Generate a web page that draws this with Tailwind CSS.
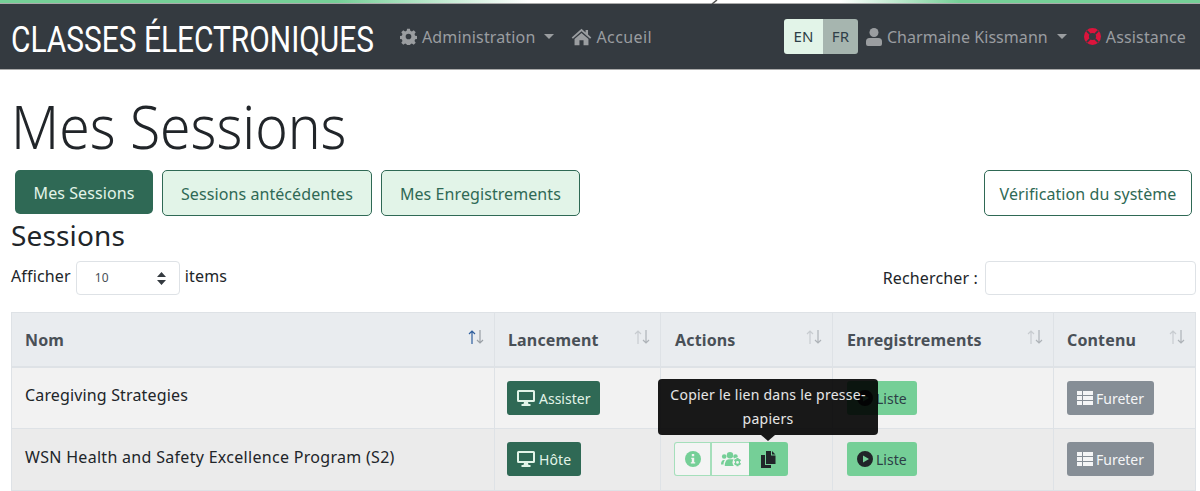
<!DOCTYPE html>
<html lang="en">
<head>
  <meta charset="UTF-8" />
  <title>Mes Sessions</title>
  <script src="https://cdn.jsdelivr.net/npm/@tailwindcss/browser@4"></script>
</head>
<body class="bg-white font-['Noto_Sans',sans-serif] text-[#212529] tracking-[0.15px] overflow-hidden h-[491px]">

  <!-- Top strip -->
  <div class="relative h-[4px] border-b border-[#aaa] bg-[linear-gradient(90deg,#75cf97_0%,#75cf97_28%,#ffffff_44%,#ffffff_70%,#75cf97_80%,#75cf97_100%)]">
    <svg class="absolute left-[711px] top-0 w-[7px] h-[4px]" viewBox="0 0 7 4"><path d="M6 0 1 4" stroke="#555" stroke-width="1.500"/></svg>
  </div>

  <!-- Navbar -->
  <nav class="h-[66px] bg-[#343a40] flex items-center pl-[11px] pr-[14px] border-b border-[#aaa]">
    <span class="w-[389px] shrink-0 mt-[6px] text-[36px] leading-none tracking-normal text-white font-['Roboto',sans-serif] scale-x-[0.83] origin-left whitespace-nowrap">CLASSES ÉLECTRONIQUES</span>
    <div class="flex items-center gap-[5px] text-[#9a9da0] text-[16px] whitespace-nowrap">
      <svg class="w-[17px] h-[17px]" viewBox="0 0 24 24" fill="#9a9da0"><path fill-rule="evenodd" d="M10 1h4l.6 3 2.2.9 2.6-1.7 2.8 2.8-1.7 2.6.9 2.2 3 .6v4l-3 .6-.9 2.2 1.7 2.6-2.8 2.8-2.6-1.7-2.2.9-.6 3h-4l-.6-3-2.2-.9-2.6 1.7-2.8-2.8 1.7-2.6-.9-2.2-3-.6v-4l3-.6.9-2.2-1.700-2.600 2.800-2.800 2.600 1.700 2.200-.9zM12 8a4 4 0 1 0 0 8 4 4 0 0 0 0-8z"/></svg>
      <span>Administration</span>
      <span class="ml-[4px] border-x-[5px] border-x-transparent border-t-[5px] border-t-[#9a9da0]"></span>
    </div>
    <div class="flex items-center gap-[4px] ml-[17px] text-[#9a9da0] text-[16px]">
      <svg class="w-[21px] h-[18px]" viewBox="0 0 24 22" fill="#9a9da0"><path d="M12 1 0 11.500l1.500 1.700L12 4l10.500 9.200 1.500-1.700-4-3.500V2.500h-3V5.400z"/><path d="M12 6 3.500 13.400V21H9.500v-6h5v6h6v-7.600z"/></svg>
      <span class="tracking-[0.4px]">Accueil</span>
    </div>
    <div class="ml-auto flex items-center text-[16px] text-[#9a9da0] whitespace-nowrap">
      <div class="flex h-[35px] rounded-[3px] overflow-hidden text-[15px] mr-[8px]">
        <span class="w-[39px] bg-[#e2f4e8] text-[#2c3e46] flex items-center justify-center">EN</span>
        <span class="w-[35px] bg-[#a6b5af] text-[#2f4048] flex items-center justify-center">FR</span>
      </div>
      <svg class="w-[16px] h-[18px] mr-[5px]" viewBox="0 0 16 18" fill="#9a9da0"><circle cx="8" cy="4.500" r="4.500"/><path d="M3.500 10h9A3.500 3.500 0 0 1 16 13.500V16a2 2 0 0 1-2 2H2a2 2 0 0 1-2-2v-2.500A3.500 3.500 0 0 1 3.500 10z"/></svg>
      <span class="tracking-[0.06px]">Charmaine Kissmann</span>
      <span class="ml-[9px] mr-[17px] border-x-[5px] border-x-transparent border-t-[5px] border-t-[#9a9da0]"></span>
      <svg class="w-[17px] h-[17px] mr-[5px]" viewBox="0 0 24 24"><circle cx="12" cy="12" r="12" fill="#dc143c"/><circle cx="12" cy="12" r="5" fill="#343a40"/><path d="m4 4 4.500 4.500M20 4l-4.500 4.500M4 20l4.500-4.500M20 20l-4.500-4.500" stroke="#343a40" stroke-width="2.500"/></svg>
      <span>Assistance</span>
    </div>
  </nav>

  <main class="relative">
    <h1 class="pl-[12px] pt-[18px] text-[60px] leading-[76px] tracking-normal font-light text-[#212529] scale-x-[0.92] origin-left whitespace-nowrap">Mes Sessions</h1>

    <!-- Tabs -->
    <div class="flex items-start pl-[15px] pr-[8px] mt-[6px] text-[16px] tracking-[0.08px]">
      <a class="w-[138px] h-[44px] pt-[1px] flex items-center justify-center rounded-[5px] bg-[#2f6955] text-[#e2f4e8]">Mes Sessions</a>
      <a class="ml-[9px] h-[46px] px-[18px] pt-[1px] flex items-center rounded-[5px] border border-[#2f6955] bg-[#e2f4e8] text-[#2f6955]">Sessions antécédentes</a>
      <a class="ml-[9px] h-[46px] px-[18px] pt-[1px] flex items-center rounded-[5px] border border-[#2f6955] bg-[#e2f4e8] text-[#2f6955]">Mes Enregistrements</a>
      <a class="ml-auto w-[208px] h-[46px] pt-[1px] flex items-center justify-center rounded-[5px] border border-[#2f6955] bg-white text-[#2f6955]">Vérification du système</a>
    </div>

    <h2 class="pl-[11px] -mt-[1px] text-[28px] leading-[40px]">Sessions</h2>

    <!-- Table controls -->
    <div class="flex items-start justify-between pl-[11px] pr-[4px] mt-[6px] text-[16px]">
      <div class="flex">
        <span class="mt-[3px]">Afficher</span>
        <span class="ml-[5px] w-[104px] h-[34px] rounded-[4px] border border-[#dee2e6] flex items-center justify-between pl-[18px] pr-[13px] text-[12px] text-[#495057]">
          10
          <svg class="w-[9px] h-[13px]" viewBox="0 0 9 13" fill="#343a40"><path d="M4.500 0 9 5H0zM4.500 13 0 8h9z"/></svg>
        </span>
        <span class="ml-[5px] mt-[3px]">items</span>
      </div>
      <div class="flex items-center">
        <span class="mr-[7px]">Rechercher :</span>
        <span class="w-[211px] h-[34px] rounded-[4px] border border-[#dee2e6] bg-white"></span>
      </div>
    </div>

    <!-- Sessions table -->
    <div class="ml-[11px] mr-[4px] mt-[17px] grid grid-cols-[484px_166px_172px_221px_142px] text-[16px] border-t border-[#dee2e6]">
      <div class="h-[55px] bg-[#e9ecef] border-b-2 border-x border-[#dee2e6] flex items-center justify-between pl-[13px] pr-[10px] font-bold text-[#495057]">Nom
        <svg class="w-[16px] h-[14px] -mt-[5px]" viewBox="0 0 16 14" fill="none" stroke-width="1.200"><path d="M4 14V1M1 4l3-3 3 3" stroke="#2f5f9e"/><path d="M12 0v13M9 10l3 3 3-3" stroke="#9aa0a6"/></svg></div>
      <div class="h-[55px] bg-[#e9ecef] border-b-2 border-r border-[#dee2e6] flex items-center justify-between pl-[13px] pr-[10px] font-bold text-[#495057]">Lancement
        <svg class="w-[16px] h-[14px] -mt-[5px]" viewBox="0 0 16 14" fill="none" stroke-width="1.200"><path d="M4 14V1M1 4l3-3 3 3" stroke="#c8ccd0"/><path d="M12 0v13M9 10l3 3 3-3" stroke="#aeb3b8"/></svg></div>
      <div class="h-[55px] bg-[#e9ecef] border-b-2 border-r border-[#dee2e6] flex items-center justify-between pl-[14px] pr-[10px] font-bold text-[#495057]">Actions
        <svg class="w-[16px] h-[14px] -mt-[5px]" viewBox="0 0 16 14" fill="none" stroke-width="1.200"><path d="M4 14V1M1 4l3-3 3 3" stroke="#c8ccd0"/><path d="M12 0v13M9 10l3 3 3-3" stroke="#aeb3b8"/></svg></div>
      <div class="h-[55px] bg-[#e9ecef] border-b-2 border-r border-[#dee2e6] flex items-center justify-between pl-[14px] pr-[10px] font-bold text-[#495057]">Enregistrements
        <svg class="w-[16px] h-[14px] -mt-[5px]" viewBox="0 0 16 14" fill="none" stroke-width="1.200"><path d="M4 14V1M1 4l3-3 3 3" stroke="#c8ccd0"/><path d="M12 0v13M9 10l3 3 3-3" stroke="#aeb3b8"/></svg></div>
      <div class="h-[55px] bg-[#e9ecef] border-b-2 border-r border-[#dee2e6] flex items-center justify-between pl-[13px] pr-[10px] font-bold text-[#495057]">Contenu
        <svg class="w-[16px] h-[14px] -mt-[5px]" viewBox="0 0 16 14" fill="none" stroke-width="1.200"><path d="M4 14V1M1 4l3-3 3 3" stroke="#c8ccd0"/><path d="M12 0v13M9 10l3 3 3-3" stroke="#aeb3b8"/></svg></div>

      <!-- Row 1 -->
      <div class="h-[61px] bg-[#f2f2f2] border-b border-x border-[#dee2e6] flex items-center pl-[13px] pb-[6px]">Caregiving Strategies</div>
      <div class="h-[61px] bg-[#f2f2f2] border-b border-r border-[#dee2e6] flex items-center pl-[12px]">
        <a class="h-[34px] px-[10px] flex items-center gap-[4px] rounded-[3px] bg-[#2f6955] text-[#e2f4e8] text-[14px] tracking-normal">
          <svg class="w-[18px] h-[16px]" viewBox="0 0 18 16" fill="#e2f4e8"><path fill-rule="evenodd" d="M1.500 0h15A1.500 1.500 0 0 1 18 1.500v9a1.500 1.500 0 0 1-1.500 1.500H11l.5 2h2v2h-9v-2h2l.5-2H1.500A1.500 1.500 0 0 1 0 10.500v-9A1.500 1.500 0 0 1 1.500 0zM2 2v8h14V2z"/></svg>
          Assister</a>
      </div>
      <div class="h-[61px] bg-[#f2f2f2] border-b border-r border-[#dee2e6]"></div>
      <div class="h-[61px] bg-[#f2f2f2] border-b border-r border-[#dee2e6] flex items-center pl-[14px]">
        <a class="h-[34px] px-[10px] flex items-center gap-[3px] rounded-[3px] bg-[#75cf97] text-[#2c3e46] text-[14px] tracking-normal">
          <svg class="w-[16px] h-[16px]" viewBox="0 0 16 16" fill="#212529"><path fill-rule="evenodd" d="M8 0a8 8 0 1 1 0 16A8 8 0 0 1 8 0zM6 4.500v7l6-3.500z"/></svg>
          Liste</a>
      </div>
      <div class="h-[61px] bg-[#f2f2f2] border-b border-r border-[#dee2e6] flex items-center pl-[13px]">
        <a class="h-[34px] px-[10px] flex items-center gap-[3px] rounded-[3px] bg-[#868e96] text-[#f4f5f6] text-[14px] tracking-normal">
          <svg class="w-[16px] h-[14px]" viewBox="0 0 16 14" fill="#f4f5f6"><path d="M0 0h5v4H0zM6 0h10v4H6zM0 5h5v4H0zM6 5h10v4H6zM0 10h5v4H0zM6 10h10v4H6z"/></svg>
          Fureter</a>
      </div>

      <!-- Row 2 -->
      <div class="h-[62px] bg-[#ebebeb] border-b border-x border-[#dee2e6] flex items-center pl-[13px] pb-[6px] tracking-[0.3px]">WSN Health and Safety Excellence Program (S2)</div>
      <div class="h-[62px] bg-[#ebebeb] border-b border-r border-[#dee2e6] flex items-center pl-[12px] pb-[1px]">
        <a class="h-[34px] px-[10px] flex items-center gap-[4px] rounded-[3px] bg-[#2f6955] text-[#e2f4e8] text-[14px] tracking-[0.1px]">
          <svg class="w-[18px] h-[16px]" viewBox="0 0 18 16" fill="#e2f4e8"><path fill-rule="evenodd" d="M1.500 0h15A1.500 1.500 0 0 1 18 1.500v9a1.500 1.500 0 0 1-1.500 1.500H11l.5 2h2v2h-9v-2h2l.5-2H1.500A1.500 1.500 0 0 1 0 10.500v-9A1.500 1.500 0 0 1 1.500 0zM2 2v8h14V2z"/></svg>
          Hôte</a>
      </div>
      <div class="h-[62px] bg-[#ebebeb] border-b border-r border-[#dee2e6] flex items-center pl-[13px] pb-[1px]">
        <div class="relative flex h-[34px]">
          <span class="w-[38px] rounded-l-[3px] border border-[#a5dfbb] border-r-2 bg-[#f4f4f4] flex items-center justify-center">
            <svg class="w-[16px] h-[16px]" viewBox="0 0 16 16"><circle cx="8" cy="8" r="8" fill="#75cf97"/><path d="M6.800 3h2.400v2.200H6.800zM6.300 6.800h2.900v4.400h1v1.300H5.800v-1.300h1V8.100h-.5z" fill="#f4f4f4"/></svg>
          </span>
          <span class="w-[37px] pl-[2px] border-y border-[#a5dfbb] bg-[#f4f4f4] flex items-center justify-center">
            <svg class="w-[21px] h-[15px]" viewBox="0 0 21 15" fill="#75cf97"><circle cx="3.200" cy="4.500" r="2.300"/><circle cx="9" cy="3.200" r="3.200"/><circle cx="14.500" cy="4.500" r="2.200"/><path d="M0 12.500c0-3 1-4.500 3-4.500h1c-1 1-1.500 2.500-1.500 4.500zM3.800 14c0-4 1.500-6.800 4-6.800h3.500c1 0 1.500.3 1.500.3V14z"/><circle cx="16.500" cy="10.500" r="5" fill="#f4f4f4"/><path fill-rule="evenodd" d="M15.500 6h2l.3 1.300 1.200-.4 1 1.700-1 .9v1.200l1 .9-1 1.700-1.200-.4-.3 1.300h-2l-.3-1.300-1.200.4-1-1.700 1-.9V9.500l-1-.9 1-1.700 1.200.4zm1 3a1.400 1.400 0 1 0 0 2.800 1.400 1.400 0 0 0 0-2.800z"/></svg>
          </span>
          <span class="w-[39px] rounded-r-[3px] bg-[#75cf97] flex items-center justify-center">
            <svg class="w-[15px] h-[17px]" viewBox="0 0 15 17" fill="#212529"><path d="M5 0h5v4.500h4.500V13H5z"/><path d="M11 0l3.500 3.500H11zM0 4h4v10h6v3H0z"/></svg>
          </span>

          <!-- Tooltip over the copy button -->
          <div class="absolute left-[-16px] bottom-[41px] w-[220px] rounded-[4px] bg-black/90 text-white/90 text-[14px] tracking-[0.25px] leading-[24px] text-center px-[8px] py-[4px]">
            Copier le lien dans le presse-papiers
            <span class="absolute left-[103px] -bottom-[6px] border-x-[7px] border-x-transparent border-t-[6px] border-t-black/90"></span>
          </div>
        </div>
      </div>
      <div class="h-[62px] bg-[#ebebeb] border-b border-r border-[#dee2e6] flex items-center pl-[14px] pb-[1px]">
        <a class="h-[34px] px-[10px] flex items-center gap-[3px] rounded-[3px] bg-[#75cf97] text-[#2c3e46] text-[14px] tracking-normal">
          <svg class="w-[16px] h-[16px]" viewBox="0 0 16 16" fill="#212529"><path fill-rule="evenodd" d="M8 0a8 8 0 1 1 0 16A8 8 0 0 1 8 0zM6 4.500v7l6-3.500z"/></svg>
          Liste</a>
      </div>
      <div class="h-[62px] bg-[#ebebeb] border-b border-r border-[#dee2e6] flex items-center pl-[13px] pb-[1px]">
        <a class="h-[34px] px-[10px] flex items-center gap-[3px] rounded-[3px] bg-[#868e96] text-[#f4f5f6] text-[14px] tracking-normal">
          <svg class="w-[16px] h-[14px]" viewBox="0 0 16 14" fill="#f4f5f6"><path d="M0 0h5v4H0zM6 0h10v4H6zM0 5h5v4H0zM6 5h10v4H6zM0 10h5v4H0zM6 10h10v4H6z"/></svg>
          Fureter</a>
      </div>
    </div>
  </main>

</body>
</html>
